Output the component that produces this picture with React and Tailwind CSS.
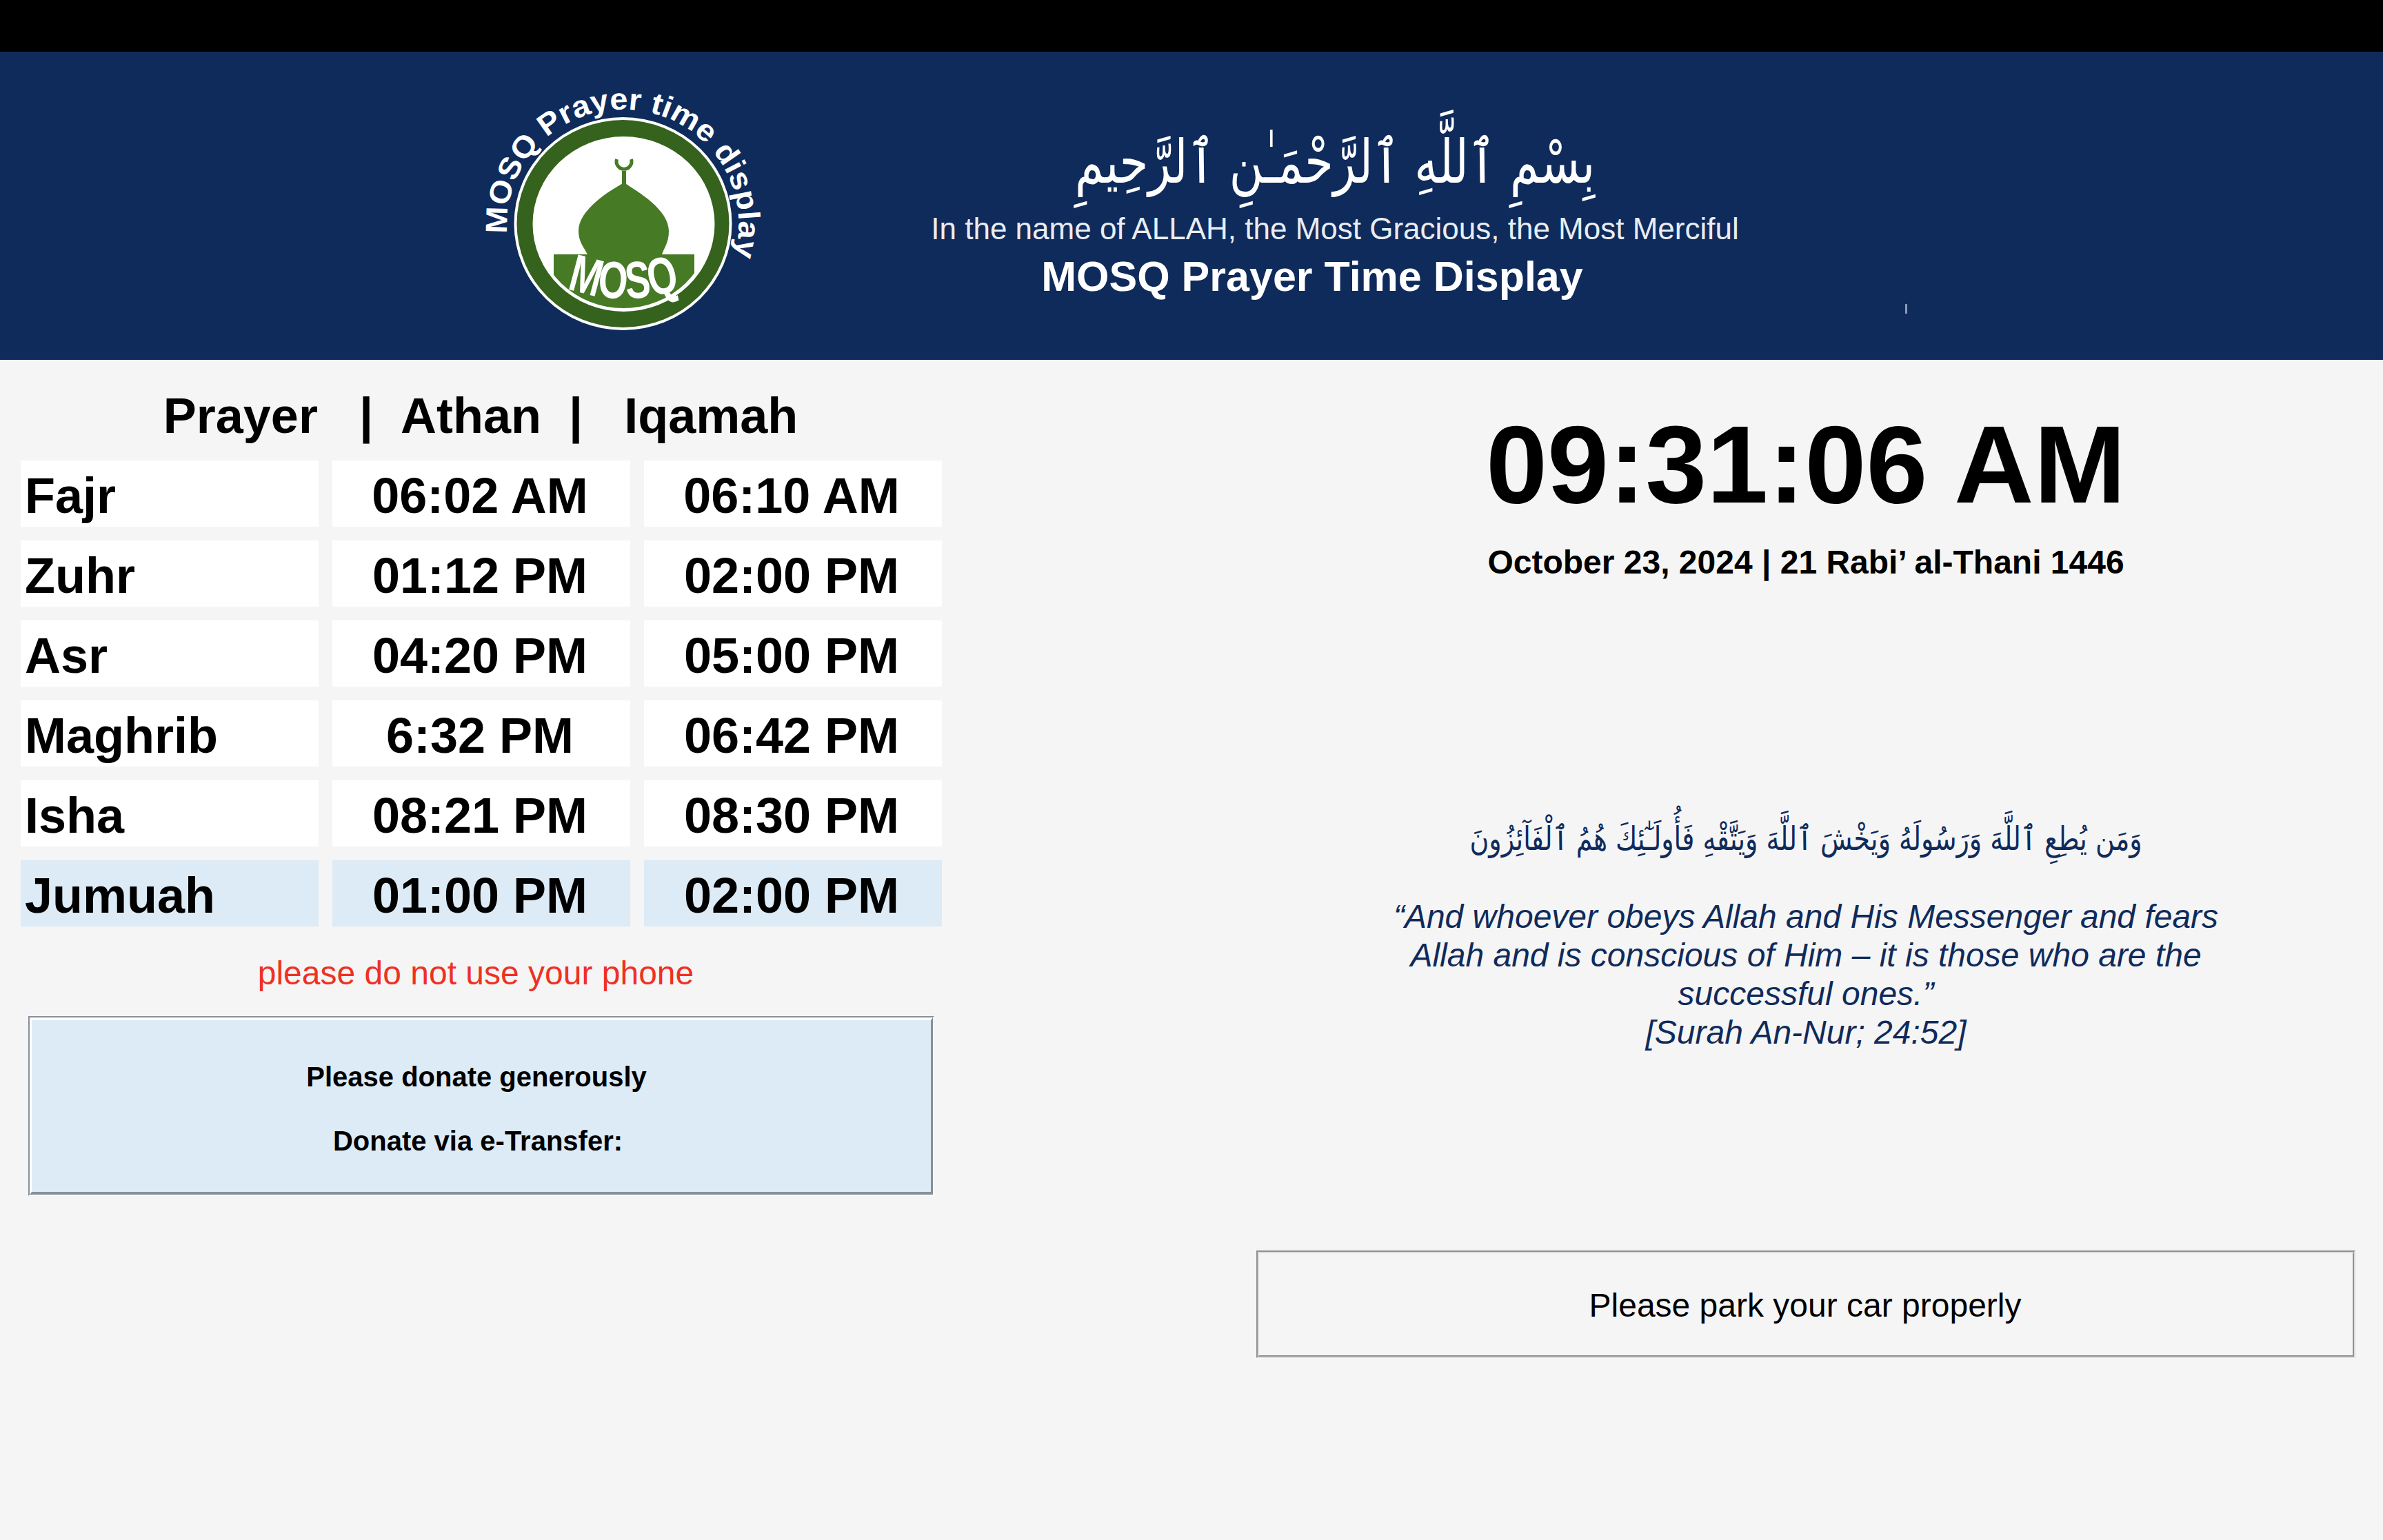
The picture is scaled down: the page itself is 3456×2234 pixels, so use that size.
import React from "react";

const rows = [
  { name: "Fajr", athan: "06:02 AM", iqamah: "06:10 AM" },
  { name: "Zuhr", athan: "01:12 PM", iqamah: "02:00 PM" },
  { name: "Asr", athan: "04:20 PM", iqamah: "05:00 PM" },
  { name: "Maghrib", athan: "6:32 PM", iqamah: "06:42 PM" },
  { name: "Isha", athan: "08:21 PM", iqamah: "08:30 PM" },
  { name: "Jumuah", athan: "01:00 PM", iqamah: "02:00 PM", highlight: true },
];

const Logo = () => (
  <svg viewBox="0 0 500 420" className="w-[500px] h-[420px] shrink-0">
    <defs>
      <path id="ringText" d="M 76 249 A 168 166 0 1 1 389 317.500" />
      <path id="mosqText" d="M 162 328 Q 245 358 332 328" />
      <clipPath id="buildingClip">
        <ellipse cx="244" cy="235" rx="127" ry="122" />
      </clipPath>
    </defs>
    <text fill="#ffffff" fontSize="44" fontFamily="Liberation Sans" fontWeight="700">
      <textPath href="#ringText" textLength="586" lengthAdjust="spacingAndGlyphs">
        MOSQ Prayer time display
      </textPath>
    </text>
    <ellipse cx="243.500" cy="234.500" rx="158" ry="154.500" fill="#ffffff" />
    <ellipse cx="243.500" cy="234.500" rx="154" ry="150.500" fill="#35621c" />
    <ellipse cx="244.500" cy="235" rx="132" ry="127" fill="#ffffff" />
    <path d="M 234.500 141 A 11 11 0 1 0 255.500 141" fill="none" stroke="#477a25" strokeWidth="5" />
    <rect x="242" y="158" width="6" height="20" fill="#477a25" />
    <path
      d="M245 175 C225 186 179 214 179 245 C179 262 188 270 192 279 L300 279 C303 270 310 262 310 245 C310 214 265 188 245 175 Z"
      fill="#477a25"
    />
    <g clipPath="url(#buildingClip)">
      <rect x="143" y="279" width="204" height="90" fill="#477a25" />
    </g>
    <text fill="#ffffff" fontSize="76" fontFamily="Liberation Sans" fontWeight="700">
      <textPath href="#mosqText" textLength="168" lengthAdjust="spacingAndGlyphs">
        MOSQ
      </textPath>
    </text>
  </svg>
);

export default function App() {
  return (
    <div className="min-h-screen bg-[#f5f5f5] font-['Liberation_Sans','DejaVu_Sans',sans-serif] text-black">
      <div className="h-[75px] bg-black" />

      <header className="relative h-[447px] bg-[#0f2b5b] pl-[660px] flex items-start">
        <div className="pt-[15px]">
          <Logo />
        </div>
        <div className="ml-[176px] w-[1200px] flex flex-col items-center text-white">
          <div dir="rtl" className="mt-[85px] h-[150px] leading-[150px] text-[67px] scale-y-[1.3] font-['DejaVu_Sans',sans-serif] whitespace-nowrap">
            بِسْمِ ٱللَّهِ ٱلرَّحْمَـٰنِ ٱلرَّحِيمِ
          </div>
          <p className="mt-[-5px] text-[44px] leading-[54px] text-[#e9edf3] whitespace-nowrap">
            In the name of ALLAH, the Most Gracious, the Most Merciful
          </p>
          <h1 className="mt-[7px] mr-[66px] text-[61px] leading-[70px] font-bold whitespace-nowrap">
            MOSQ Prayer Time Display
          </h1>
        </div>
        <span className="absolute left-[2763px] top-[366px] w-[3px] h-[14px] bg-[#8b9ab3]" />
      </header>

      <main className="flex justify-between">
        <section className="w-[1396px] px-[30px] pt-[41px]">
          <div className="h-[80px] leading-[80px] text-center text-[72px] font-bold whitespace-pre pr-[2px]">
            {"Prayer\u00a0\u00a0 | \u00a0Athan\u00a0 | \u00a0\u00a0Iqamah"}
          </div>

          <div className="mt-[25px] flex flex-col gap-[20px]">
            {rows.map((row) => (
              <div key={row.name} className="grid grid-cols-[432px_432px_432px] gap-[20px] text-[72px] font-bold">
                <div className={`h-[96px] pt-[6px] pl-[6px] flex items-center ${row.highlight ? "bg-[#dcebf6]" : "bg-white"}`}>
                  {row.name}
                </div>
                <div className={`h-[96px] pt-[6px] pr-[4px] flex items-center justify-center ${row.highlight ? "bg-[#dcebf6]" : "bg-white"}`}>
                  {row.athan}
                </div>
                <div className={`h-[96px] pt-[6px] pr-[4px] flex items-center justify-center ${row.highlight ? "bg-[#dcebf6]" : "bg-white"}`}>
                  {row.iqamah}
                </div>
              </div>
            ))}
          </div>

          <p className="mt-[40px] h-[56px] leading-[56px] text-center text-[48px] text-[#ee3124] pr-[16px]">
            please do not use your phone
          </p>

          <div className="mt-[34px] mx-[11px] border-[2px] border-t-[#87909a] border-l-[#87909a] border-r-white border-b-white">
            <div className="h-[257px] bg-[#dcebf6] border-t-[4px] border-l-[3px] border-r-[3px] border-b-[4px] border-t-white border-l-white border-r-[#87909a] border-b-[#87909a] flex flex-col items-center justify-center gap-[47px] pt-[8px] pr-[14px] text-[40px] leading-[46px] font-bold">
              <p>Please donate generously</p>
              <p className="ml-[4px]">Donate via e-Transfer:</p>
            </div>
          </div>
        </section>

        <section className="w-[1674px] px-[40px] pt-[60px] flex flex-col items-center">
          <div className="h-[184px] leading-[184px] text-[160px] font-bold whitespace-nowrap">09:31:06 AM</div>
          <p className="mt-[22px] h-[56px] leading-[56px] text-[48px] font-bold whitespace-nowrap">
            October 23, 2024 | 21 Rabi’ al-Thani 1446
          </p>
          <p dir="rtl" className="mt-[333px] h-[80px] leading-[80px] text-[38px] scale-y-[1.25] text-[#0f2b5b] font-['DejaVu_Sans',sans-serif] whitespace-nowrap">
            وَمَن يُطِعِ ٱللَّهَ وَرَسُولَهُ وَيَخْشَ ٱللَّهَ وَيَتَّقْهِ فَأُولَـٰٓئِكَ هُمُ ٱلْفَآئِزُونَ
          </p>
          <p className="mt-[45px] w-[1240px] text-center italic text-[48px] leading-[56px] text-[#0f2b5b]">
            “And whoever obeys Allah and His Messenger and fears Allah and is conscious of Him – it is those who are the successful ones.”
            <br />
            [Surah An-Nur; 24:52]
          </p>
          <div className="mt-[288px] w-full border-[2px] border-t-[#909090] border-l-[#909090] border-r-[#dddddd] border-b-[#dddddd]">
            <div className="h-[152px] border-[2px] border-t-[#dddddd] border-l-[#dddddd] border-r-[#909090] border-b-[#909090] flex items-center justify-center pt-[4px] pr-[2px] text-[48px]">
              Please park your car properly
            </div>
          </div>
        </section>
      </main>
    </div>
  );
}
